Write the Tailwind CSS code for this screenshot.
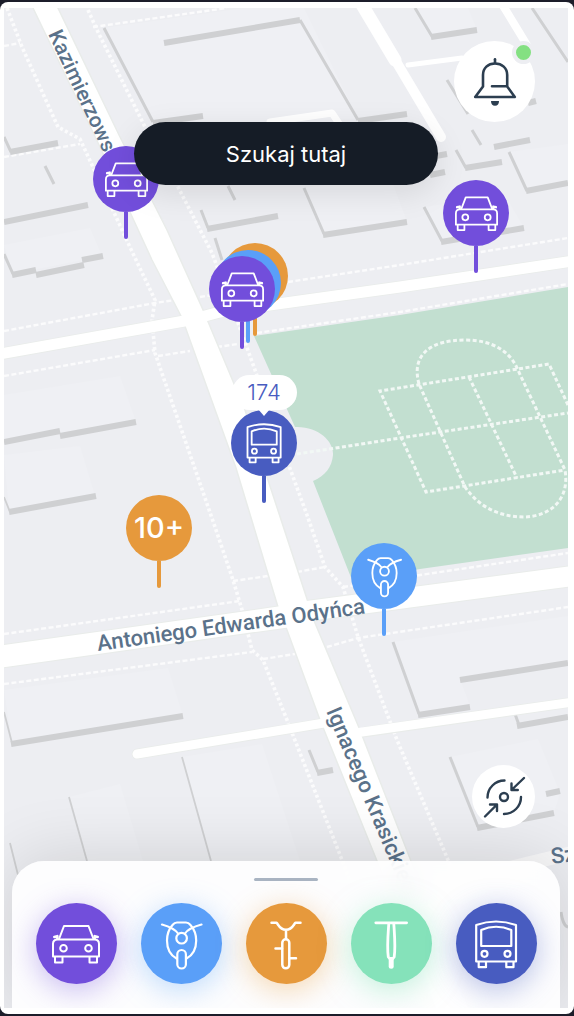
<!DOCTYPE html>
<html lang="pl">
<head>
<meta charset="utf-8">
<meta name="viewport" content="width=device-width, initial-scale=1">
<title>Mapa pojazdów</title>
<script src="https://cdn.jsdelivr.net/npm/@tailwindcss/browser@4"></script>
</head>
<body class="flex min-h-screen flex-col bg-[#1c1d2a] py-[2px] font-['Inter',sans-serif]">

<!-- Shared icons -->
<svg class="hidden" aria-hidden="true">
  <symbol id="car" viewBox="0 0 48 48" overflow="visible">
    <g fill="none" stroke="#fff" stroke-width="2" stroke-linejoin="round" stroke-linecap="round">
      <path d="M1 36.500V24Q1 19.500 5.500 19.500H42.500Q47 19.500 47 24V36.500Z"/>
      <path d="M7 19L12 6H36.500L41.500 19"/>
      <path d="M3 37V42.500H10.500V37M37.500 37V42.500H45V37"/>
      <circle cx="11.500" cy="28.300" r="3.300"/><circle cx="36.500" cy="28.300" r="3.300"/>
      <path stroke-width="2.600" d="M2.300 17L5.300 16.200V18.200M45.700 17L42.700 16.200V18.200"/>
    </g>
  </symbol>
  <symbol id="moped" viewBox="0 0 48 48" overflow="visible">
    <g fill="none" stroke="#fff" stroke-width="2.200" stroke-linejoin="round" stroke-linecap="round">
      <path d="M19.500 38.500C13 35 10 28 10 20.500C10 14 12 9 15.500 5Q17.500 2.500 20 2.500H29Q31.500 2.500 33.500 5C37 9 39.200 14 39.200 20.500C39.200 28 36 35 29.500 38.500"/>
      <path d="M5 4.500C12 6.500 18 9 21 13.500M44.500 4.500C37 6.500 31 9 28 13.500"/>
      <circle cx="24.600" cy="18.200" r="5.300"/>
      <rect x="20.300" y="30" width="8.600" height="18.500" rx="4.300"/>
    </g>
  </symbol>
  <symbol id="bike" viewBox="0 0 48 48" overflow="visible">
    <g fill="none" stroke="#fff" stroke-width="2.500" stroke-linejoin="round" stroke-linecap="round">
      <path d="M9.500 2.800H14.500C16.500 4.500 17.500 9.800 24 9.800S31.500 4.500 33.500 2.800H38.500M24 9.800V18"/>
      <rect x="20.300" y="19.300" width="7" height="29" rx="3.500"/>
      <path d="M13.500 28.500H20M27.500 38.300H34"/>
    </g>
  </symbol>
  <symbol id="kick" viewBox="0 0 48 48" overflow="visible">
    <g fill="none" stroke="#fff" stroke-width="2.800" stroke-linejoin="round" stroke-linecap="round">
      <path d="M8.800 2.800H39.600"/>
      <path d="M21.800 3.500C21 15 19.800 27 21.300 37L22.500 38.500H26L27.200 37C28.700 27 27.500 15 26.800 3.500"/>
      <path stroke-width="5" d="M24.200 40V46.300"/>
    </g>
  </symbol>
  <symbol id="bus" viewBox="0 0 48 48" overflow="visible">
    <g fill="none" stroke="#fff" stroke-width="2.200" stroke-linejoin="round" stroke-linecap="round">
      <path d="M4.200 41.500V5Q24 -2 44 5V41.500Z"/>
      <path d="M9.200 26V10Q24 3.500 39.300 10V26Z"/>
      <path d="M6.700 42V47.200H14V42M34.300 42V47.200H41.500V42"/>
      <circle cx="12.500" cy="33.800" r="3"/><circle cx="35.500" cy="33.800" r="3"/>
    </g>
  </symbol>
</svg>

<div class="flex flex-1 flex-col rounded-lg bg-white py-[6px] pr-[6px] pl-1">
<main class="relative isolate flex flex-1 flex-col overflow-hidden bg-[#edeef2]">

  <!-- Map canvas -->
  <svg class="absolute inset-0 -z-10 h-full w-full" viewBox="4 8 564 1000" preserveAspectRatio="xMidYMid slice" role="img" aria-label="Mapa okolicy">
    <rect x="0" y="0" width="574" height="1016" fill="#edeef2"/>
    <!-- Roofs -->
    <g fill="#eff0f4">
      <path d="M104 28L300 0L358 119L155 122ZM164 42L300 20L345 110L200 117ZM304 188L390 176L407 222L324 234ZM424 207L505 195L524 228L442 241ZM509 152L568 144V183L527 191Z"/>
      <path d="M4 245L90 228L102 256L13 274ZM4 395L120 376L136 422L4 441ZM4 455L80 446L95 496L9 511ZM4 690L168 668L183 716L12 743ZM393 642L568 616V663L460 679L470 706L419 714Z"/>
      <path d="M182 757L262 744L300 861H211ZM69 797L120 784L143 861H87ZM450 757L538 739L560 793L554 813L478 827ZM415 8H468L477 30L432 37Z"/>
    </g>
    <!-- Park -->
    <path fill="#c2dfd0" d="M254 336L400 315L568 287V548L420 569L352 580L313 481C325 476 332 467 333 455C334 442 319 426 295 427Z"/>
    <!-- Footpaths -->
    <g fill="none" stroke="#fbfbfc" stroke-width="2.400" stroke-dasharray="5 2.500">
      <path d="M93 27L227 8M4 46L20 43M4 157L80 144M4 331L155 303L175 300M200 297L212 295M288 282L400 265L568 238M4 376L155 350M158 356L190 351M217 347L238 344"/>
      <path d="M257 333L400 312L568 284M4 634L240 601M233 581L268 576M4 684L252 652M263 659L295 654M327 647L358 638L568 607M297 572L325 567M343 587L420 575L568 553"/>
    </g>
    <g fill="none" stroke="#fbfbfc" stroke-width="3.600" stroke-dasharray="3 2.500">
      <path d="M7 8L22 47L58 127L80 139L93 167L128 243L155 300L152 320L155 353L215 527L233 580L243 613L252 650L263 660L287 720L342 860L390 990"/>
      <path d="M88 10L97 30L145 127L177 185L212 253L237 320L255 370L288 463L307 515L325 567L343 587L358 637L397 740L448 860L500 990"/>
    </g>
    <!-- Pitch markings -->
    <g fill="none" stroke="#f2f8f5" stroke-width="3" stroke-dasharray="4 2.500">
      <path d="M297 454L400 438L568 413M568 405L549 364L380 391L426 492L565 470M469 377L517 478"/>
      <path d="M419 384C411 355 430 340 465 340C493 340 510 352 517 368L565 470C570 500 550 516 525 517C500 517 480 508 465 487Z"/>
    </g>
    <!-- Building shadows -->
    <g fill="none" stroke="#cfd0d2">
      <path stroke-width="3" d="M104 28L153 122M300 20L358 120M415 8L433 38M532 8L568 62M447 80L468 114M472 130L481 145M456 150L466 168M509 152L527 191M304 188L324 234M424 207L442 241M4 137L11 152M45 166L54 184M4 254L13 274M228 186L235 200M201 210L208 228M215 238L222 260M393 642L419 714M515 714L519 725M309 750L318 772M450 757L478 827M561 912Q563 926 568 927"/>
      <path stroke-width="1.800" d="M4 497L10 512M4 712L12 743M69 797L87 861M182 757L211 861M10 843L18 875"/>
      <path stroke-width="6" d="M153 123L203 116M164 43L300 20M358 121L407 114M431 37L477 30M528 103L536 101M494 147L530 140M465 168L502 162M526 191L568 183M436 156L447 154M430 175L445 172M323 235L407 222M441 242L524 228M10 152L58 143M4 222L88 205M12 275L36 270M36 275L84 265M82 260L103 256M4 442L60 431M60 436L136 422M9 512L96 496M207 229L278 216"/>
      <path stroke-width="6" d="M418 715L470 707M460 680L568 663M517 726L568 717M11 744L183 716M317 773L333 770M477 828L554 813M546 794L560 791"/>
    </g>
    <!-- Roads -->
    <g fill="none" stroke="#e9ecea" stroke-linecap="round">
      <path stroke-width="12.500" d="M0 354L190 320L220 312L400 287L580 260"/>
      <path stroke-width="24" d="M-10 658L290 616"/>
      <path stroke-width="22" d="M300 612L580 575"/>
      <path stroke-width="10.500" d="M137 754L325 723M365 732L580 701"/>
    </g>
    <path fill="#fff" stroke="#e9ecea" stroke-width="1.500" d="M32 6L100 147L152 260L182 318L236 468L278 607L287 630L320 720L377 861L436 1010H470L411 861L360 730L315 623L308 602L290 547L245 410L204 312L167 230L120 137L57 6Z"/>
    <g fill="none" stroke="#fff" stroke-linecap="round" stroke-linejoin="round">
      <path stroke-width="11" d="M0 354L190 320L220 312L400 287L580 260"/>
      <path stroke-width="22" d="M-10 658L290 616"/>
      <path stroke-width="20" d="M300 612L580 575"/>
      <path stroke-width="9" d="M137 754L330 722M355 733L580 701"/>
      <path stroke-width="13" d="M361 3L395 60"/>
      <path stroke-width="10" d="M394 58L441 137"/>
      <path stroke-width="5" d="M408 65L462 58"/>
      <path stroke-width="8" d="M502 4L530 50"/>
      <path stroke-width="7" d="M270 122L332 113L342 128"/>
      <path stroke="#f8f8f9" stroke-width="14" d="M440 885L580 851"/>
    </g>
    <!-- Street names -->
    <g fill="#5b728a" font-family="Roboto, sans-serif" font-weight="500" font-size="22">
      <text transform="translate(48 34) rotate(65)" font-size="21">Kazimierzowska</text>
      <text transform="translate(98 651) rotate(-8)">Antoniego Edwarda Odyńca</text>
      <text transform="translate(326 711) rotate(67)">Ignacego Krasickiego</text>
      <text transform="translate(552 864) rotate(-8)">Sz</text>
    </g>
  </svg>

  <!-- Map pins -->
  <button type="button" aria-label="Samochód" class="absolute top-[138px] left-[89px] flex flex-col items-center">
    <span class="flex size-[66px] items-center justify-center rounded-full bg-[#724edb]"><svg class="size-[43px] overflow-visible"><use href="#car"/></svg></span>
    <span class="h-[27px] w-1 rounded-b-full bg-[#724edb]"></span>
  </button>
  <button type="button" aria-label="Samochód" class="absolute top-[172px] left-[439px] flex flex-col items-center">
    <span class="flex size-[66px] items-center justify-center rounded-full bg-[#724edb]"><svg class="size-[43px] overflow-visible"><use href="#car"/></svg></span>
    <span class="h-[27px] w-1 rounded-b-full bg-[#724edb]"></span>
  </button>
  <button type="button" aria-label="Rower" class="absolute top-[235px] left-[218px] flex flex-col items-center">
    <span class="size-[66px] rounded-full bg-[#e6993c]"></span>
    <span class="h-[27px] w-1 rounded-b-full bg-[#e6993c]"></span>
  </button>
  <button type="button" aria-label="Skuter" class="absolute top-[242px] left-[211px] flex flex-col items-center">
    <span class="size-[66px] rounded-full bg-[#5a9ff8]"></span>
    <span class="h-[27px] w-1 rounded-b-full bg-[#5a9ff8]"></span>
  </button>
  <button type="button" aria-label="Samochód" class="absolute top-[248px] left-[205px] flex flex-col items-center">
    <span class="flex size-[66px] items-center justify-center rounded-full bg-[#724edb]"><svg class="size-[43px] overflow-visible"><use href="#car"/></svg></span>
    <span class="h-[27px] w-1 rounded-b-full bg-[#724edb]"></span>
  </button>
  <button type="button" aria-label="Autobus 174" class="absolute top-[367px] left-[227px] flex flex-col items-center">
    <span class="relative z-10 flex h-[35px] w-[65px] items-center justify-center rounded-full bg-white text-[22px] font-light text-[#485cc0]">174
      <svg class="absolute top-full left-1/2 -mt-px h-[7px] w-3 -translate-x-1/2" viewBox="0 0 12 7"><path fill="#fff" d="M0 0H12L6 7Z"/></svg>
    </span>
    <span class="flex size-[66px] items-center justify-center rounded-full bg-[#485cc0]"><svg class="size-[40px] overflow-visible"><use href="#bus"/></svg></span>
    <span class="h-[27px] w-1 rounded-b-full bg-[#485cc0]"></span>
  </button>
  <button type="button" aria-label="Ponad 10 rowerów" class="absolute top-[487px] left-[122px] flex flex-col items-center">
    <span class="flex size-[66px] items-center justify-center rounded-full bg-[#e6993c] text-[29px] font-medium text-white">10+</span>
    <span class="h-[27px] w-1 rounded-b-full bg-[#e6993c]"></span>
  </button>
  <button type="button" aria-label="Skuter" class="absolute top-[535px] left-[347px] flex flex-col items-center">
    <span class="flex size-[66px] items-center justify-center rounded-full bg-[#5a9ff8]"><svg class="size-[40px] overflow-visible"><use href="#moped"/></svg></span>
    <span class="h-[27px] w-1 rounded-b-full bg-[#5a9ff8]"></span>
  </button>

  <!-- Top controls -->
  <header class="relative flex flex-col items-center pt-[33px]">
    <button type="button" aria-label="Powiadomienia" class="relative mr-[33px] flex size-[81px] items-center justify-center self-end rounded-full bg-white">
      <svg class="size-12" viewBox="0 0 48 48" fill="none" stroke="#2c3e50" stroke-width="2.600" stroke-linecap="round" stroke-linejoin="round">
        <path d="M24 1.300V5"/>
        <path d="M4.200 39L12 28.500V17C12 10 17 5.500 24 5.500S36.200 10 36.200 17V28.500L43.800 39ZM21 28.300H36"/>
        <path fill="#2c3e50" stroke="none" d="M20 43H28Q28 47.800 24 47.800T20 43Z"/>
      </svg>
      <span class="absolute top-0 right-0 size-[23px] rounded-full border-4 border-[#edeef2] bg-[#84e082]"></span>
    </button>
    <button type="button" class="h-[63px] w-[304px] rounded-full bg-[#151c26] pt-[2px] text-[22px] text-white shadow-[0_8px_32px_rgba(0,0,0,0.1)]">Szukaj tutaj</button>
  </header>

  <!-- Bottom controls -->
  <footer class="relative mt-auto flex flex-col">
    <button type="button" aria-label="Moja lokalizacja" class="z-10 mr-[33px] mb-[33px] flex size-[63px] items-center justify-center self-end rounded-full bg-white">
      <svg class="size-12" viewBox="0 0 48 48" fill="none" stroke="#2c3e50" stroke-width="2.400" stroke-linecap="round" stroke-linejoin="round">
        <circle cx="24" cy="24" r="4"/>
        <path d="M7.500 24.500A17 17 0 0 1 24.500 7.500M41 24A17 17 0 0 1 24 41"/>
        <path d="M44 5L31.500 17M31.500 10.500V17H37.800M5 43.500L17 31.500M10 31.500H17V38"/>
      </svg>
    </button>
    <nav aria-label="Rodzaje pojazdów" class="mx-2 flex flex-col items-center rounded-t-[32px] bg-white/88 px-3 pt-[17px] pb-6 shadow-[0_0_70px_rgba(0,0,0,0.14)] backdrop-blur-md">
      <span class="h-[3px] w-16 rounded-full bg-[#a9b4c2]"></span>
      <div class="mt-[22px] flex justify-center gap-6">
        <button type="button" aria-label="Samochody" class="flex size-[81px] items-center justify-center rounded-full bg-[#724edb] shadow-[0_6px_30px_rgba(114,78,219,0.4)]"><svg class="size-12 overflow-visible"><use href="#car"/></svg></button>
        <button type="button" aria-label="Skutery" class="flex size-[81px] items-center justify-center rounded-full bg-[#5a9ff8] shadow-[0_6px_30px_rgba(90,159,248,0.4)]"><svg class="size-12 overflow-visible"><use href="#moped"/></svg></button>
        <button type="button" aria-label="Rowery" class="flex size-[81px] items-center justify-center rounded-full bg-[#e6993c] shadow-[0_6px_30px_rgba(230,153,60,0.4)]"><svg class="size-12 overflow-visible"><use href="#bike"/></svg></button>
        <button type="button" aria-label="Hulajnogi" class="flex size-[81px] items-center justify-center rounded-full bg-[#85e2ba] shadow-[0_6px_30px_rgba(133,226,186,0.5)]"><svg class="size-12 overflow-visible"><use href="#kick"/></svg></button>
        <button type="button" aria-label="Autobusy" class="flex size-[81px] items-center justify-center rounded-full bg-[#485cc0] shadow-[0_6px_30px_rgba(72,92,192,0.4)]"><svg class="size-12 overflow-visible"><use href="#bus"/></svg></button>
      </div>
    </nav>
  </footer>
</main>
</div>
</body>
</html>
